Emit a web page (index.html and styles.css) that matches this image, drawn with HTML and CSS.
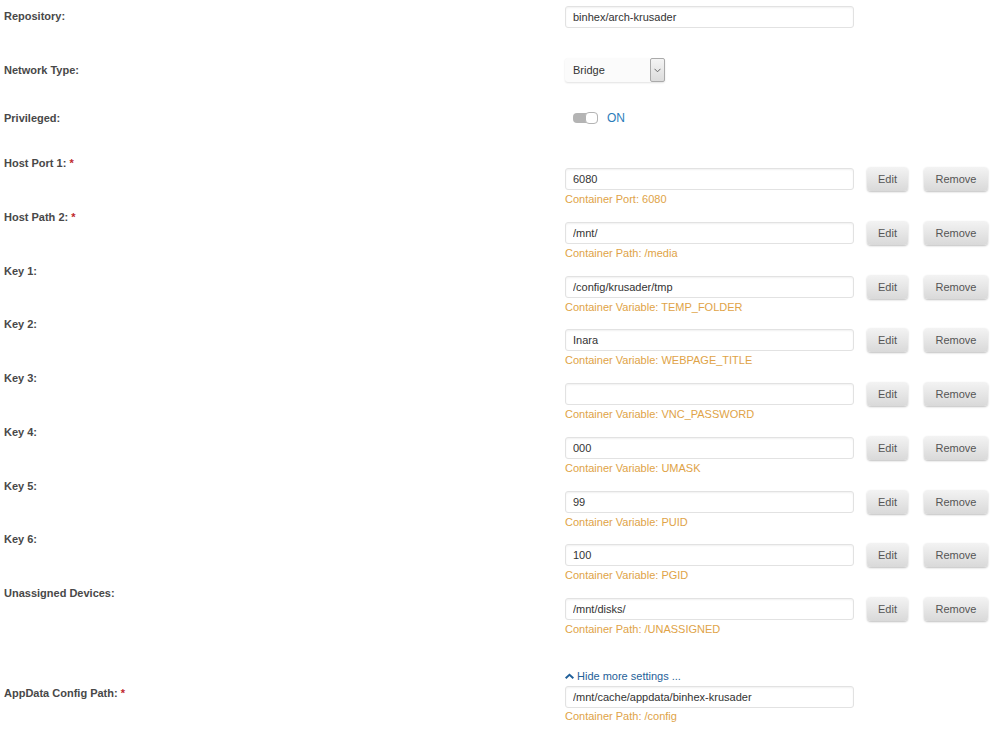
FILE: index.html
```html
<!DOCTYPE html>
<html lang="en">
<head>
    <meta charset="UTF-8">
    <title>Container Settings</title>
    <link rel="stylesheet" href="styles.css">
</head>
<body>
<div class="form">
    <div class="row row-top">
        <label class="label">Repository:</label>
        <div class="field"><input class="text" type="text" value="binhex/arch-krusader"></div>
    </div>

    <div class="row row-select">
        <label class="label">Network Type:</label>
        <div class="field">
            <div class="select">
                <span class="select-value">Bridge</span>
                <span class="select-arrow">
                    <svg width="7" height="5" viewBox="0 0 7 5"><path d="M0.5 0.8 L3.5 3.8 L6.5 0.8" fill="none" stroke="#666" stroke-width="1"/></svg>
                </span>
            </div>
        </div>
    </div>

    <div class="row row-switch">
        <label class="label">Privileged:</label>
        <div class="field">
            <span class="switch"><span class="knob"></span></span>
            <span class="switch-text">ON</span>
        </div>
    </div>

    <div class="row entry">
        <label class="label">Host Port 1: <span class="req">*</span></label>
        <div class="field">
            <div class="line">
                <input class="text" type="text" value="6080">
                <button class="btn btn-edit">Edit</button>
                <button class="btn btn-remove">Remove</button>
            </div>
            <div class="hint">Container Port: 6080</div>
        </div>
    </div>

    <div class="row entry">
        <label class="label">Host Path 2: <span class="req">*</span></label>
        <div class="field">
            <div class="line">
                <input class="text" type="text" value="/mnt/">
                <button class="btn btn-edit">Edit</button>
                <button class="btn btn-remove">Remove</button>
            </div>
            <div class="hint">Container Path: /media</div>
        </div>
    </div>

    <div class="row entry">
        <label class="label">Key 1:</label>
        <div class="field">
            <div class="line">
                <input class="text" type="text" value="/config/krusader/tmp">
                <button class="btn btn-edit">Edit</button>
                <button class="btn btn-remove">Remove</button>
            </div>
            <div class="hint">Container Variable: TEMP_FOLDER</div>
        </div>
    </div>

    <div class="row entry">
        <label class="label">Key 2:</label>
        <div class="field">
            <div class="line">
                <input class="text" type="text" value="Inara">
                <button class="btn btn-edit">Edit</button>
                <button class="btn btn-remove">Remove</button>
            </div>
            <div class="hint">Container Variable: WEBPAGE_TITLE</div>
        </div>
    </div>

    <div class="row entry">
        <label class="label">Key 3:</label>
        <div class="field">
            <div class="line">
                <input class="text" type="text" value="">
                <button class="btn btn-edit">Edit</button>
                <button class="btn btn-remove">Remove</button>
            </div>
            <div class="hint">Container Variable: VNC_PASSWORD</div>
        </div>
    </div>

    <div class="row entry">
        <label class="label">Key 4:</label>
        <div class="field">
            <div class="line">
                <input class="text" type="text" value="000">
                <button class="btn btn-edit">Edit</button>
                <button class="btn btn-remove">Remove</button>
            </div>
            <div class="hint">Container Variable: UMASK</div>
        </div>
    </div>

    <div class="row entry">
        <label class="label">Key 5:</label>
        <div class="field">
            <div class="line">
                <input class="text" type="text" value="99">
                <button class="btn btn-edit">Edit</button>
                <button class="btn btn-remove">Remove</button>
            </div>
            <div class="hint">Container Variable: PUID</div>
        </div>
    </div>

    <div class="row entry">
        <label class="label">Key 6:</label>
        <div class="field">
            <div class="line">
                <input class="text" type="text" value="100">
                <button class="btn btn-edit">Edit</button>
                <button class="btn btn-remove">Remove</button>
            </div>
            <div class="hint">Container Variable: PGID</div>
        </div>
    </div>

    <div class="row entry">
        <label class="label">Unassigned Devices:</label>
        <div class="field">
            <div class="line">
                <input class="text" type="text" value="/mnt/disks/">
                <button class="btn btn-edit">Edit</button>
                <button class="btn btn-remove">Remove</button>
            </div>
            <div class="hint">Container Path: /UNASSIGNED</div>
        </div>
    </div>

    <div class="row row-toggle">
        <div></div>
        <div class="field">
            <a class="more" href="#">
                <svg width="9" height="6" viewBox="0 0 9 6"><path d="M0 4.6 L4.5 0.4 L9 4.6 L7.6 6 L4.5 3.1 L1.4 6 Z" fill="#1f5f99"/></svg>
                Hide more settings ...
            </a>
        </div>
    </div>

    <div class="row row-last">
        <label class="label">AppData Config Path: <span class="req">*</span></label>
        <div class="field">
            <input class="text" type="text" value="/mnt/cache/appdata/binhex-krusader">
            <div class="hint">Container Path: /config</div>
        </div>
    </div>
</div>
</body>
</html>
```

FILE: styles.css
```css
body {
    margin: 0;
    font-family: "Liberation Sans", Arial, sans-serif;
    font-size: 11px;
    color: #333;
    background: #fff;
}
.row {
    display: grid;
    grid-template-columns: 565px 1fr;
}
.label {
    padding-left: 4px;
    font-weight: bold;
    color: #484848;
    line-height: 13px;
}
.req {
    color: #c0282d;
}
.text {
    box-sizing: border-box;
    width: 289px;
    height: 22px;
    margin: 0;
    padding: 0 7px;
    border: 1px solid #e2e2e2;
    border-radius: 3px;
    background: #fff;
    box-shadow: inset 0 1px 2px rgba(0,0,0,0.06);
    font-family: inherit;
    font-size: 11px;
    color: #333;
    display: block;
}
.row-top {
    height: 52px;
    padding-top: 6px;
    box-sizing: border-box;
    align-items: start;
}
.row-top .label {
    padding-top: 4px;
}
.row-select,
.row-switch {
    height: 24px;
    margin-top: 6px;
    align-items: center;
}
.row-switch {
    margin-top: 24px;
    margin-bottom: 24px;
}
.select {
    box-sizing: border-box;
    width: 100px;
    height: 24px;
    display: flex;
    align-items: center;
    justify-content: space-between;
    border-radius: 3px;
    background: #fbfbfb;
    box-shadow: 0 1px 2px rgba(0,0,0,0.12);
    padding-left: 8px;
    color: #333;
}
.select-arrow {
    box-sizing: border-box;
    width: 15px;
    height: 24px;
    display: flex;
    align-items: center;
    justify-content: center;
    border: 1px solid #aaa;
    border-radius: 2px;
    background: linear-gradient(#f4f4f4, #dcdcdc);
}
.field {
    display: flex;
    flex-direction: column;
}
.row-switch .field {
    flex-direction: row;
    align-items: center;
    padding-left: 8px;
}
.switch {
    position: relative;
    width: 25px;
    height: 10px;
    border-radius: 4px;
    background: #b4b4b4;
}
.knob {
    position: absolute;
    right: 0;
    top: -1px;
    box-sizing: border-box;
    width: 13px;
    height: 12px;
    border-radius: 4px;
    background: #fff;
    border: 1px solid #b4b4b4;
}
.switch-text {
    margin-left: 9px;
    color: #2a7cba;
    font-size: 12px;
}
.entry {
    height: 53.75px;
}
.entry .label {
    padding-top: 3px;
}
.entry .field {
    padding-top: 13px;
}
.line {
    display: flex;
    align-items: center;
}
.btn {
    box-sizing: border-box;
    height: 24px;
    margin: 0;
    padding: 0;
    border: none;
    border-radius: 4px;
    background: linear-gradient(#f3f3f3, #d9d9d9);
    box-shadow: 0 1px 2px rgba(0,0,0,0.25);
    font-family: inherit;
    font-size: 11px;
    color: #555;
    cursor: pointer;
}
.btn-edit {
    width: 41px;
    margin-left: 13px;
}
.btn-remove {
    width: 64px;
    margin-left: 16px;
}
.hint {
    margin-top: 2px;
    line-height: 13px;
    color: #e0a347;
}
.row-toggle {
    margin-top: 32px;
}
.more {
    display: flex;
    align-items: center;
    gap: 3px;
    line-height: 13px;
    font-size: 11px;
    color: #1f5f99;
    text-decoration: none;
}
.row-last .label {
    padding-top: 4px;
}
.row-last .field {
    padding-top: 3px;
}
```
